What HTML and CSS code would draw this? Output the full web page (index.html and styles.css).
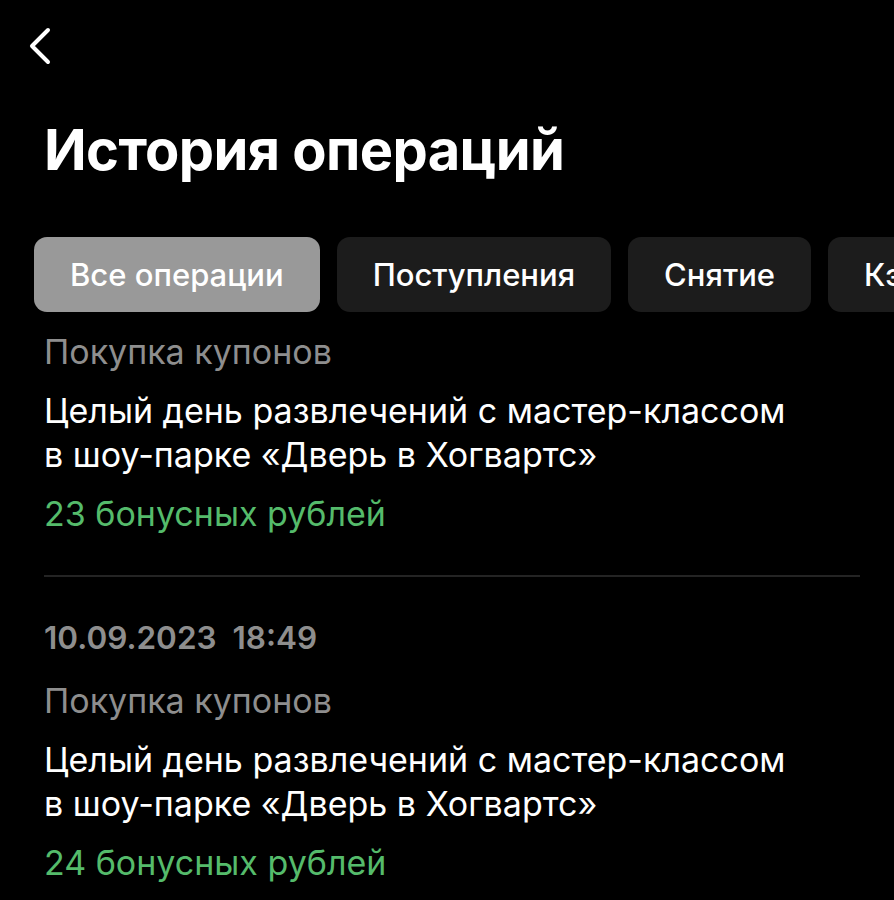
FILE: index.html
```html
<!DOCTYPE html>
<html lang="ru">
<head>
  <meta charset="UTF-8">
  <title>История операций</title>
  <link rel="stylesheet" href="styles.css">
</head>
<body>
  <header class="topbar">
    <button class="back" aria-label="Назад">
      <svg width="24" height="40" viewBox="0 0 24 40">
        <path d="M20 4 L4 20 L20 36" fill="none" stroke="#fff" stroke-width="4" stroke-linecap="round" stroke-linejoin="round"/>
      </svg>
    </button>
  </header>

  <h1 class="title">История операций</h1>

  <nav class="chips">
    <button class="chip chip-active">Все операции</button>
    <button class="chip">Поступления</button>
    <button class="chip">Снятие</button>
    <button class="chip">Кэшбэк</button>
  </nav>

  <section class="list">
    <article class="item item-first">
      <div class="kind">Покупка купонов</div>
      <div class="desc">Целый день развлечений с мастер-классом<br>в шоу-парке «Дверь в Хогвартс»</div>
      <div class="amount">23 бонусных рублей</div>
    </article>

    <article class="item">
      <div class="date">10.09.2023 &nbsp;18:49</div>
      <div class="kind">Покупка купонов</div>
      <div class="desc">Целый день развлечений с мастер-классом<br>в шоу-парке «Дверь в Хогвартс»</div>
      <div class="amount">24 бонусных рублей</div>
    </article>
  </section>
</body>
</html>
```

FILE: styles.css
```css
body {
  margin: 0;
  background-color: #000000;
  color: #ffffff;
  font-family: 'Inter', 'Roboto', sans-serif;
  overflow: hidden;
}

.topbar {
  height: 92px;
  padding: 26px 0 0 28px;
  box-sizing: border-box;
}

.back {
  background: none;
  border: none;
  padding: 0;
  cursor: pointer;
}

.title {
  margin: 18px 0 0 44px;
  font-size: 56px;
  font-weight: 700;
  line-height: 80px;
  letter-spacing: -0.6px;
}

.chips {
  display: flex;
  gap: 17px;
  margin-top: 47px;
  padding-left: 34px;
  overflow: hidden;
  white-space: nowrap;
}

.chip {
  flex-shrink: 0;
  height: 75px;
  padding: 0 36px;
  border: none;
  border-radius: 13px;
  background-color: #1c1c1c;
  color: #ffffff;
  font-family: inherit;
  font-size: 31px;
  font-weight: 500;
}

.chip-active {
  background-color: #999999;
}

.list {
  padding: 0 34px 0 44px;
  margin-top: 18px;
}

.item {
  padding: 39px 0;
  border-bottom: 2px solid #242424;
}

.item-first {
  padding-top: 0;
}

.kind,
.desc,
.amount {
  font-size: 34px;
  line-height: 44px;
}

.date {
  color: #8e8e8e;
  font-size: 31.5px;
  font-weight: 600;
  line-height: 44px;
  margin-bottom: 19px;
}

.kind {
  color: #8e8e8e;
  margin-bottom: 15px;
}

.desc {
  color: #ffffff;
  margin-bottom: 15px;
}

.amount {
  color: #55bb6b;
}
```
